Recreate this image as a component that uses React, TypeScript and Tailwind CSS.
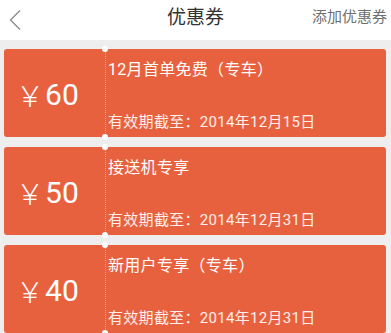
import React from 'react';

interface Coupon {
  amount: number;
  title: string;
  expiry: string;
}

const coupons: Coupon[] = [
  { amount: 60, title: '12月首单免费（专车）', expiry: '2014年12月15日' },
  { amount: 50, title: '接送机专享', expiry: '2014年12月31日' },
  { amount: 40, title: '新用户专享（专车）', expiry: '2014年12月31日' },
];

const font = { fontFamily: 'Roboto, "Noto Sans CJK SC", sans-serif' };

const CouponCard: React.FC<{ coupon: Coupon }> = ({ coupon }) => {
  return (
    <div className="flex h-[88px] ml-[4px] mr-[5px] bg-[#e8613f] rounded-[3px] text-white">
      <div className="w-[100px] flex items-center pl-[12px] pt-[3px]">
        <span className="text-[28px] leading-none font-['Noto_Sans_CJK_SC'] font-light">￥</span>
        <span className="text-[30px] leading-none ml-[1px]">{coupon.amount}</span>
      </div>
      <div className="relative w-[2px] flex justify-center">
        <div className="w-px h-full border-l border-dotted border-[#f6a48e]" />
        <div className="absolute -top-[3px] left-[-2px] w-[6px] h-[6px] rounded-full bg-white" />
        <div className="absolute -bottom-[3px] left-[-2px] w-[6px] h-[6px] rounded-full bg-white" />
      </div>
      <div className="flex-1 flex flex-col justify-between pl-[2px] pt-[11px] pb-[5px]">
        <p className="text-[16px] leading-[20px] tracking-[0.3px]">{coupon.title}</p>
        <p className="text-[15px] leading-[20px] tracking-[0.3px] text-white/90">有效期截至：{coupon.expiry}</p>
      </div>
    </div>
  );
};

export default function App() {
  return (
    <div className="w-[391px] h-[333px] overflow-hidden bg-[#eeeeee]" style={font}>
      <div className="h-[40px] bg-white grid grid-cols-[1fr_auto_1fr] items-center">
        <div className="pl-[9px]">
          <svg width="12" height="22" viewBox="0 0 12 22" fill="none" stroke="#8a8a8a" strokeWidth="1.3">
            <path d="M11 1.5 L1.5 11 L11 20.5" />
          </svg>
        </div>
        <h1 className="text-[19px] text-[#333333] pb-[4px]">优惠券</h1>
        <div className="text-right pr-[4px] text-[15px] text-[#6f6f6f] pb-[6px]">添加优惠券</div>
      </div>
      <div className="flex flex-col gap-[10px] pt-[9px]">
        {coupons.map((c, i) => (
          <CouponCard key={i} coupon={c} />
        ))}
      </div>
    </div>
  );
}
